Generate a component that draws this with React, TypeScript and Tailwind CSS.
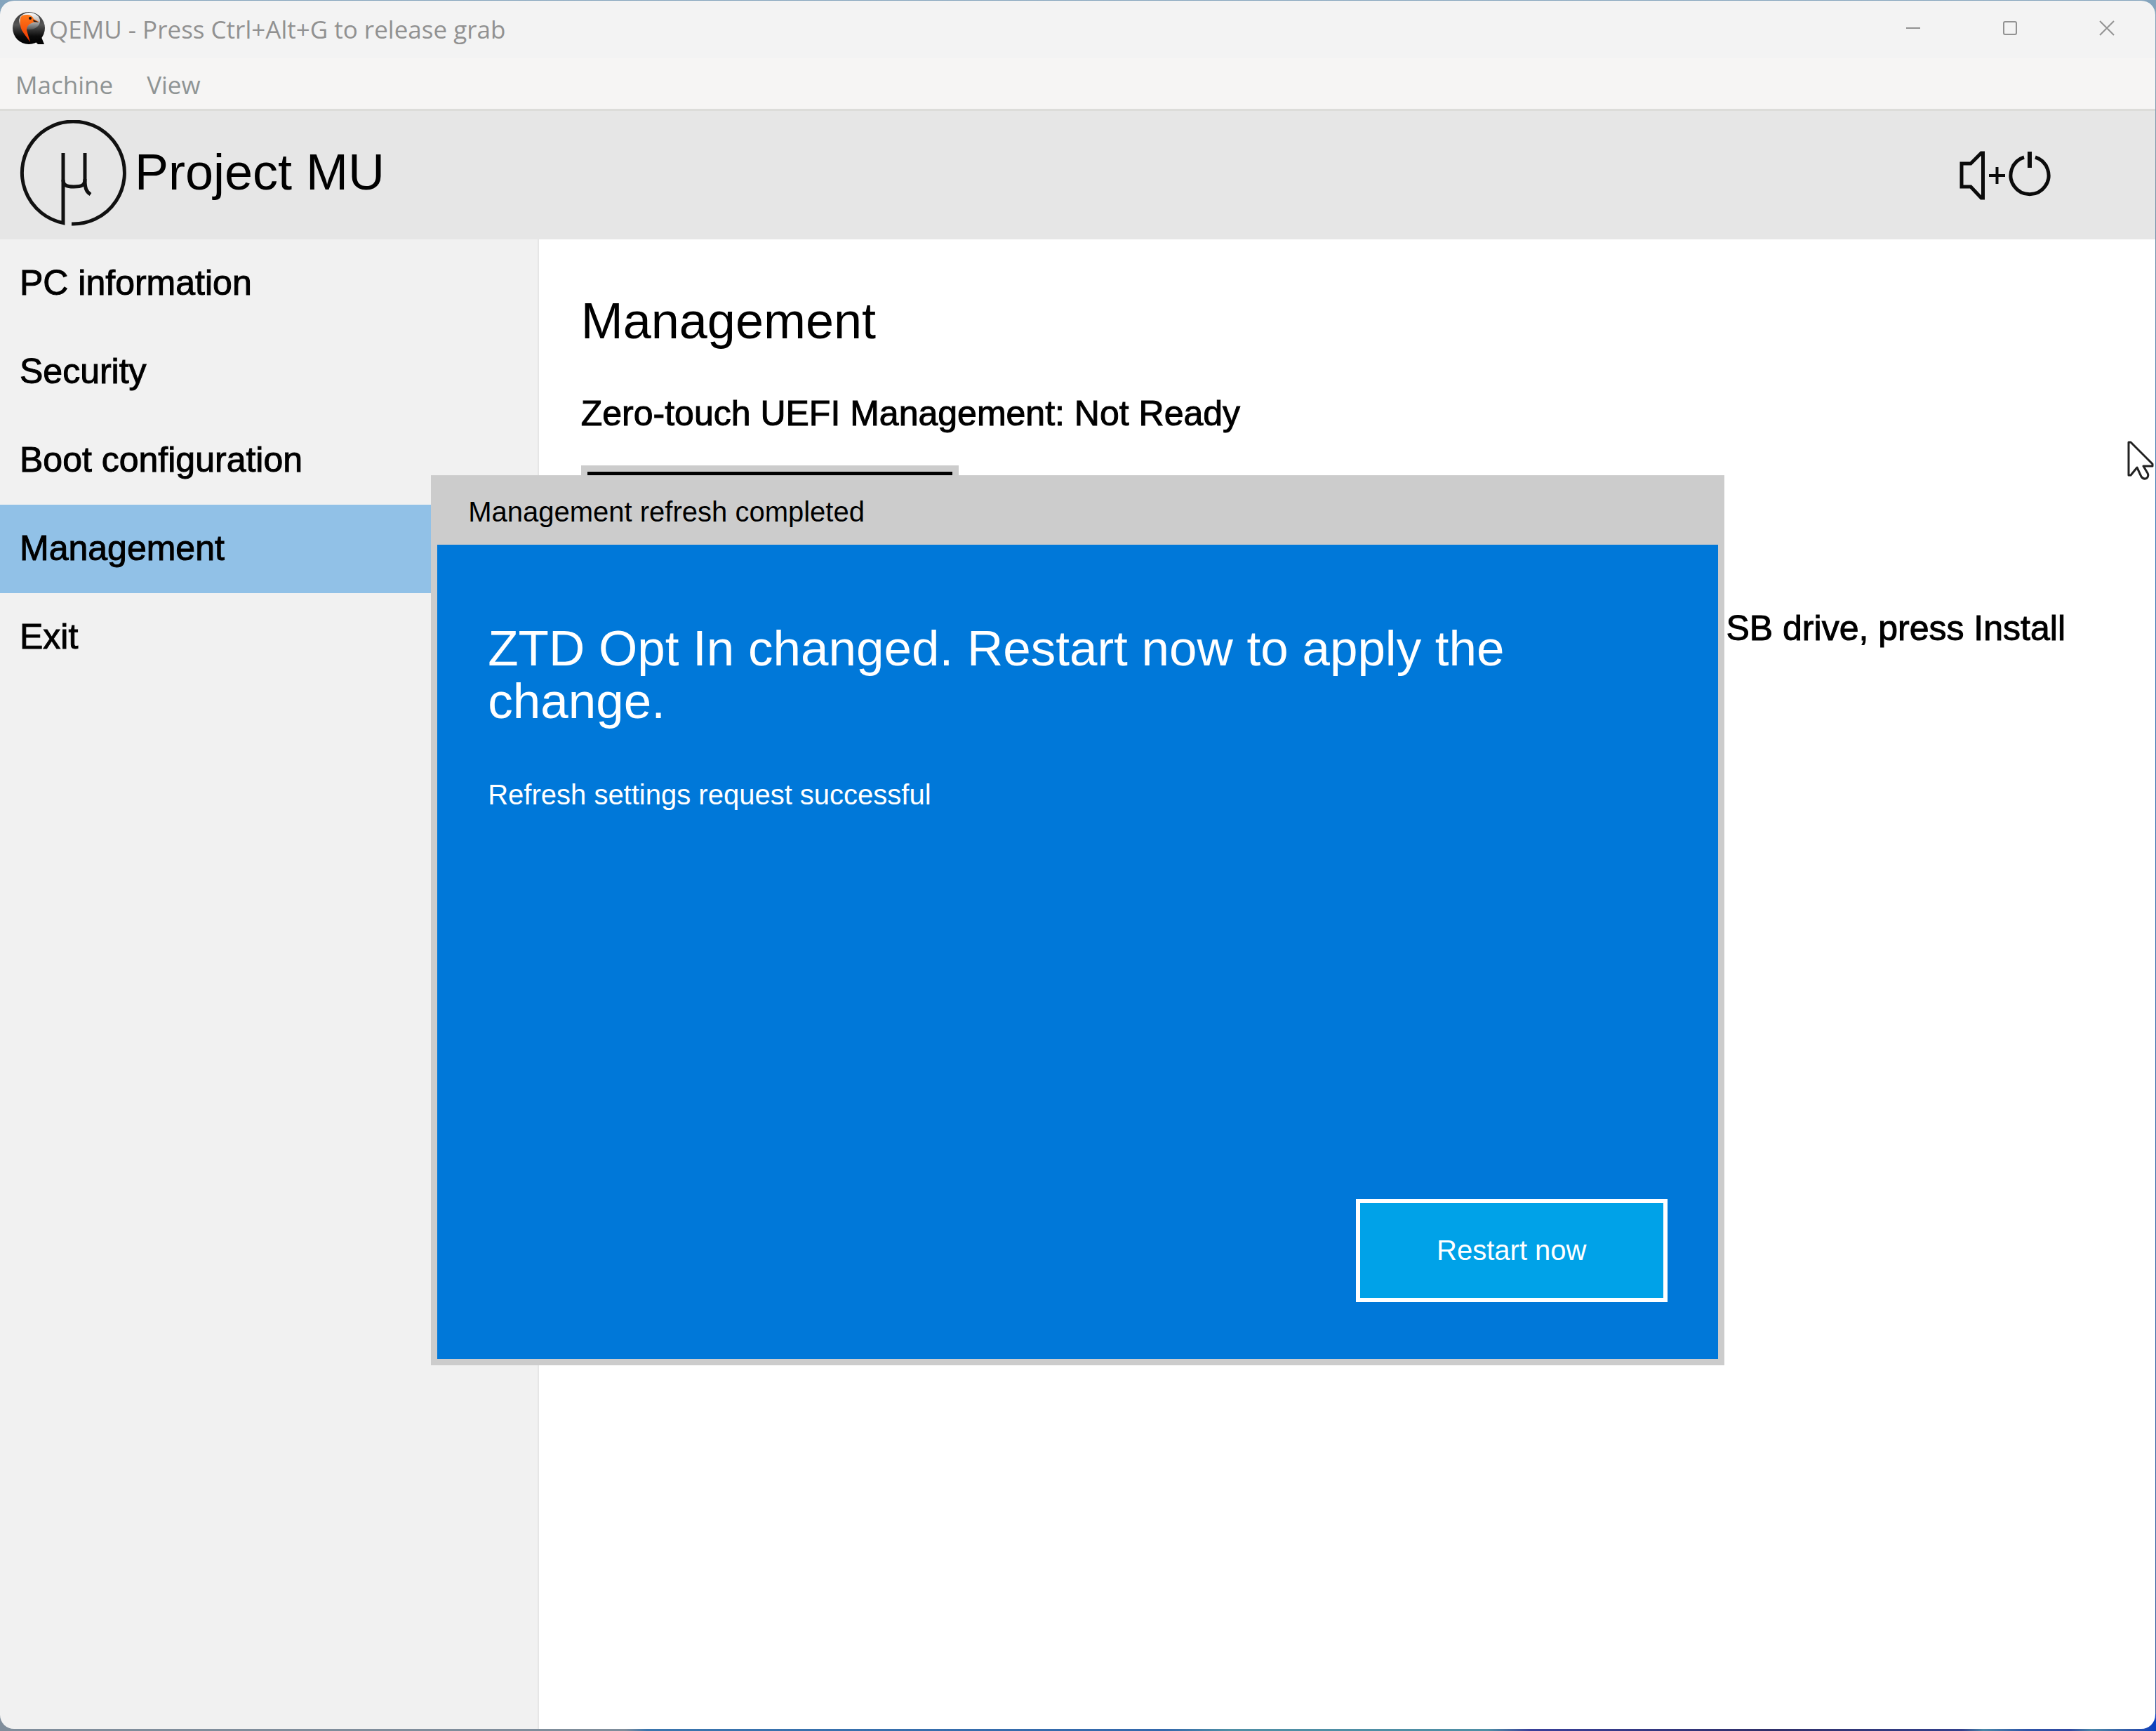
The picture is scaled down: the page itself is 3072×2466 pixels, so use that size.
const navItems = ["PC information", "Security", "Boot configuration", "Management", "Exit"];

function QemuIcon() {
  return (
    <svg className="h-[46px] w-[46px]" viewBox="0 0 46 46" aria-hidden="true">
      <defs>
        <linearGradient id="q-shell" x1="0" y1="0" x2="0" y2="1">
          <stop offset="0" stopColor="#3a3a3a" />
          <stop offset="0.4" stopColor="#555555" />
          <stop offset="0.75" stopColor="#0c0c0c" />
          <stop offset="1" stopColor="#000000" />
        </linearGradient>
        <linearGradient id="q-shine" x1="0" y1="0" x2="0" y2="1">
          <stop offset="0" stopColor="#ffffff" />
          <stop offset="0.5" stopColor="#bdbdbd" />
          <stop offset="1" stopColor="#555555" />
        </linearGradient>
        <linearGradient id="q-bird" x1="0" y1="0" x2="0" y2="1">
          <stop offset="0" stopColor="#ff7a1a" />
          <stop offset="1" stopColor="#f03400" />
        </linearGradient>
      </defs>
      <circle cx="23" cy="23" r="23" fill="url(#q-shell)" />
      <path d="M33 43 L41 36 L45 46 L36 46 Z" fill="#050505" />
      <ellipse cx="24" cy="13" rx="15" ry="12" fill="url(#q-shine)" />
      <path
        d="M14 5 C20 3 28 4 30 10 L37 14 C33 15 30 14 27 16 C22 18 20 21 20 26 L25 43 C20 36 16 31 13 26 C11 21 10 16 11 10 C11 8 12 6 14 5 Z"
        fill="url(#q-bird)"
      />
      <path d="M29 11 L38 15 L30 14 Z" fill="#1c1c1c" />
      <circle cx="25" cy="9" r="2" fill="#111" />
    </svg>
  );
}

function MuLogo() {
  return (
    <svg className="h-[154px] w-[154px]" viewBox="0 0 154 154" fill="none" stroke="#111" strokeWidth="5" aria-hidden="true">
      <path d="M63 47 V146.600 A73 73 0 1 1 75 148" />
      <path d="M94 47 V84 C94 93 90 95 78 95 C68 95 63 93 63 85" />
      <path d="M94 84 C94 98 96 102 102 106" />
    </svg>
  );
}

function VolumePowerIcon() {
  return (
    <svg className="h-[76px] w-[136px]" viewBox="0 0 136 76" fill="none" stroke="#0b0b0b" strokeWidth="5" aria-hidden="true">
      <path d="M7 21 H20 L35 6 H37.500 V70 H35 L20 54 H7 Z" />
      <path d="M46 38 H69 M57.500 26 V50" strokeWidth="4" />
      <path d="M96 12 A27 27 0 1 0 112 12" />
      <path d="M104 4 V27" strokeWidth="6" />
    </svg>
  );
}

function TitleBar() {
  return (
    <header className="flex h-[82px] items-start bg-[#f3f3f3]">
      <div className="flex h-[78px] flex-1 items-center gap-1.5 pl-[18px]">
        <QemuIcon />
        <h1 className="pt-1 font-['Open_Sans'] text-[35px] leading-[48px] text-[#919191]">
          QEMU - Press Ctrl+Alt+G to release grab
        </h1>
      </div>
      <div className="flex h-[78px]">
        <button type="button" aria-label="Minimize" className="flex w-[138px] items-center justify-center">
          <svg className="h-[22px] w-[22px]" viewBox="0 0 22 22" fill="none" stroke="#929292" strokeWidth="2">
            <path d="M1 11 H21" />
          </svg>
        </button>
        <button type="button" aria-label="Maximize" className="flex w-[138px] items-center justify-center">
          <svg className="h-[22px] w-[22px]" viewBox="0 0 22 22" fill="none" stroke="#929292" strokeWidth="2">
            <rect x="2" y="2" width="18" height="18" rx="2" />
          </svg>
        </button>
        <button type="button" aria-label="Close" className="flex w-[138px] items-center justify-center">
          <svg className="h-[22px] w-[22px]" viewBox="0 0 22 22" fill="none" stroke="#929292" strokeWidth="2">
            <path d="M1 1 L21 21 M21 1 L1 21" />
          </svg>
        </button>
      </div>
    </header>
  );
}

function MenuBar() {
  return (
    <nav
      aria-label="Window menu"
      className="flex h-[75px] items-center gap-12 border-b-[3px] border-[#dcdcd9] bg-[#f6f5f4] pt-1 pl-[22px] font-['Open_Sans'] text-[35px] leading-[48px] text-[#8f9494]"
    >
      <button type="button">Machine</button>
      <button type="button">View</button>
    </nav>
  );
}

function Sidebar() {
  return (
    <nav aria-label="Settings" className="w-1/4 shrink-0 border-r-2 border-[#e6e6e6] bg-[#f1f1f1]">
      {navItems.map((item) => (
        <a
          key={item}
          href="#"
          aria-current={item === "Management" ? "page" : undefined}
          className="flex h-[126px] items-center pb-0.5 pl-7 text-[50px] leading-[60px] [-webkit-text-stroke:1px_black] aria-[current=page]:bg-[#91c1e7]"
        >
          {item}
        </a>
      ))}
    </nav>
  );
}

function RefreshDialog() {
  return (
    <div className="absolute inset-0 flex items-center justify-center pt-px">
      <section
        role="dialog"
        aria-labelledby="dialog-title"
        className="flex h-[55%] w-[60%] flex-col bg-[#cccccc] px-[9px] pb-[9px]"
      >
        <h2 id="dialog-title" className="flex h-[99px] shrink-0 items-center pt-1 pl-[44px] text-[40px] leading-[48px]">
          Management refresh completed
        </h2>
        <div className="flex flex-1 flex-col bg-[#0078d9] px-[72px] pt-[110px] pb-[81px] text-white">
          <p className="text-[71px] leading-[75px]">ZTD Opt In changed. Restart now to apply the change.</p>
          <p className="mt-[72px] text-[40px] leading-[48px]">Refresh settings request successful</p>
          <button
            type="button"
            className="mt-auto h-[147px] w-[444px] self-end border-[6px] border-white bg-[#00a2e8] text-[40px] leading-[48px]"
          >
            Restart now
          </button>
        </div>
      </section>
    </div>
  );
}

export default function App() {
  return (
    <div className="flex min-h-screen flex-col bg-[linear-gradient(180deg,#84a4bd_0%,#7d95a8_10%,#3a78b5_30%,#2f5a9c_100%)] font-['Liberation_Sans',sans-serif] text-black">
      <div className="flex flex-1 flex-col bg-[linear-gradient(90deg,#7f8d9b_0%,#7f8d9b_29%,#3a75ad_30%,#3468ac_54%,#4f8fa5_57%,#4f8fa5_69%,#39409a_71%,#30306a_82%,#33408c_91%,#4a86a8_92%,#2f55a8_94%,#3048a0_96%,#4a86a8_97%,#2f55a8_99%,#0a3fc0_100%)] bg-[length:100%_24px] bg-bottom bg-no-repeat pt-px pr-px pb-[3px]">
        <div className="flex flex-1 flex-col overflow-hidden rounded-[20px]">
          <TitleBar />
          <MenuBar />
          <div className="relative flex flex-1 flex-col">
            <header className="flex h-[183px] items-center justify-between bg-[#e6e6e6] pr-[147px] pl-[27px]">
              <div className="flex items-center gap-[11px] pb-1">
                <MuLogo />
                <span className="pb-1.5 text-[72px] leading-[84px]">Project MU</span>
              </div>
              <VolumePowerIcon />
            </header>
            <div className="flex flex-1">
              <Sidebar />
              <main className="flex flex-1 flex-col bg-white pt-[74px] pl-[60px]">
                <h2 className="text-[72px] leading-[84px]">Management</h2>
                <p className="mt-[60px] text-[50px] leading-[60px] [-webkit-text-stroke:1px_black]">
                  Zero-touch UEFI Management: Not Ready
                </p>
                <button
                  type="button"
                  aria-label="Management action"
                  className="mt-11 h-[140px] w-[538px] border-[9px] border-[#cccccc] bg-black"
                />
                <p className="mt-[62px] pr-[128px] text-right text-[50px] leading-[60px] [-webkit-text-stroke:1px_black]">
                  USB drive, press Install
                </p>
              </main>
            </div>
            <RefreshDialog />
            <svg
              className="absolute top-[470px] right-[2px] h-[56px] w-[38px]"
              viewBox="0 0 38 56"
              fill="white"
              stroke="#222"
              strokeWidth="3"
              strokeLinejoin="round"
              aria-hidden="true"
            >
              <path d="M2 2 V49 L5 49 L14 38 L20 51 Q24 56 28 53 Q31 50 29 46 L23 36 L36 36 V33 L5 2 Z" />
            </svg>
          </div>
        </div>
      </div>
    </div>
  );
}
